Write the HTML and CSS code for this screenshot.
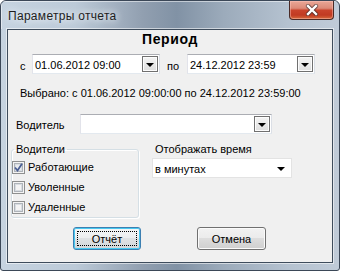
FILE: index.html
```html
<!DOCTYPE html>
<html>
<head>
<meta charset="utf-8">
<link rel="stylesheet" href="styles.css">
</head>
<body>
<div class="window">
  <div class="titlebar">
    <span class="title">Параметры отчета</span>
    <span class="close">
      <svg width="16" height="12" viewBox="0 0 16 12"><path d="M4 2 L12 10 M12 2 L4 10" stroke="#3a2a2a" stroke-width="4.2" fill="none" stroke-linecap="round" opacity="0.7"/><path d="M4 2 L12 10 M12 2 L4 10" stroke="#fff" stroke-width="2.4" fill="none" stroke-linecap="square"/></svg>
    </span>
  </div>
  <div class="frame">
    <div class="client">
      <div class="heading">Период</div>
      <div class="daterow">
        <span class="lbl-from">с</span>
        <div class="combo date"><span class="val">01.06.2012 09:00</span><span class="dd"><i></i></span></div>
        <span class="lbl-to">по</span>
        <div class="combo date"><span class="val">24.12.2012 23:59</span><span class="dd"><i></i></span></div>
      </div>
      <div class="selected">Выбрано: с 01.06.2012 09:00:00 по 24.12.2012 23:59:00</div>
      <div class="driverrow">
        <span class="lbl-driver">Водитель</span>
        <div class="combo driver"><span class="val"></span><span class="dd"><i></i></span></div>
      </div>
      <div class="lower">
        <fieldset class="group">
          <legend>Водители</legend>
          <div class="chkrow"><span class="chk checked"><svg width="9" height="9" viewBox="0 0 9 9"><path d="M1 4.5 L3.5 7.5 L8 0.8" stroke="#4b5f94" stroke-width="1.8" fill="none"/></svg></span><span>Работающие</span></div>
          <div class="chkrow"><span class="chk"></span><span>Уволенные</span></div>
          <div class="chkrow"><span class="chk"></span><span>Удаленные</span></div>
        </fieldset>
        <div class="timecol">
          <div class="lbl-time">Отображать время</div>
          <div class="flatcombo"><span>в минутах</span><i></i></div>
        </div>
      </div>
      <div class="buttons">
        <button class="btn default"><span>Отчёт</span></button>
        <button class="btn cancel"><span>Отмена</span></button>
      </div>
    </div>
  </div>
</div>
</body>
</html>
```
FILE: styles.css
```css
html, body {
  margin: 0;
  padding: 0;
  background: #ffffff;
}
.window {
  width: 340px;
  height: 271px;
  box-sizing: border-box;
  border: 1px solid #3b4757;
  border-radius: 6px 6px 3px 3px;
  background: linear-gradient(to right, #c6d3e0 0%, #bccad8 22%, #919fb0 42%, #8192a5 52%, #9cabbb 66%, #b5c2d0 85%, #c0cbd8 100%);
  display: flex;
  flex-direction: column;
  font-family: "Liberation Sans", Arial, sans-serif;
  font-size: 11px;
  color: #000;
  overflow: hidden;
}
.titlebar {
  height: 28px;
  display: flex;
  align-items: flex-start;
  justify-content: space-between;
  box-shadow: inset 1px 1px 0 rgba(255,255,255,0.5);
}
.title {
  font-family: "Liberation Sans", Arial, sans-serif;
  font-size: 12px;
  letter-spacing: 0.3px;
  color: #1e1e1e;
  margin: 8px 0 0 7px;
  text-shadow: 0 0 6px #eef3f8, 0 0 10px #e6edf4;
}
.close {
  width: 45px;
  height: 19px;
  margin-right: 5px;
  box-sizing: border-box;
  border: 1px solid #4a2a26;
  border-top: none;
  border-radius: 0 0 4px 4px;
  background: linear-gradient(#e9a797 0%, #dc8a78 40%, #c9432b 52%, #c13a22 78%, #d66a3c 100%);
  box-shadow: inset 0 0 0 1px rgba(255,200,190,0.45);
  display: flex;
  align-items: center;
  justify-content: center;
}
.frame {
  flex: 1;
  padding: 0 6px 7px 6px;
  display: flex;
}
.client {
  flex: 1;
  background: #f0f0f0;
  border: 1px solid #3e4c5c;
  box-shadow: 0 0 0 1px rgba(255,255,255,0.55);
  display: flex;
  flex-direction: column;
}
.heading {
  margin-top: 1px;
  height: 16px;
  line-height: 16px;
  text-align: center;
  font-weight: bold;
  font-size: 14px;
  letter-spacing: 0.6px;
}
.daterow {
  margin-top: 7px;
  height: 20px;
  display: flex;
  align-items: center;
  padding-left: 12px;
}
.lbl-from {
  width: 12px;
  padding-top: 4px;
}
.lbl-to {
  width: 20px;
  margin-left: 7px;
  padding-top: 4px;
}
.combo {
  box-sizing: border-box;
  height: 20px;
  background: #fff;
  border: 1px solid #abadb3;
  border-color: #abadb3 #dbdfe6 #e3e9ef #e2e3ea;
  display: flex;
  align-items: center;
  justify-content: space-between;
  padding: 0 1px 0 2px;
}
.combo.date {
  width: 128px;
}
.combo .val {
  padding-top: 1px;
  white-space: nowrap;
}
.dd {
  width: 16px;
  height: 16px;
  box-sizing: border-box;
  border: 1px solid #707070;
  background: linear-gradient(#f4f4f4, #dedede);
  box-shadow: inset 0 0 0 1px #fcfcfc;
  display: flex;
  align-items: center;
  justify-content: center;
}
.dd i {
  width: 0;
  height: 0;
  border-left: 4px solid transparent;
  border-right: 4px solid transparent;
  border-top: 4px solid #000;
  margin-top: 1px;
}
.selected {
  margin-top: 12px;
  height: 14px;
  line-height: 14px;
  padding-left: 12px;
  white-space: nowrap;
}
.driverrow {
  margin-top: 14px;
  height: 20px;
  display: flex;
  align-items: center;
  padding-left: 8px;
}
.lbl-driver {
  width: 64px;
  padding-top: 2px;
}
.combo.driver {
  width: 192px;
}
.lower {
  margin-top: 8px;
  display: flex;
  align-items: flex-start;
}
.group {
  margin: 0 0 0 3px;
  width: 128px;
  box-sizing: border-box;
  padding: 1px 0 0 0;
  border: 1px solid #d5dfe5;
  border-radius: 3px;
  box-shadow: inset 1px 1px 0 #fff, 1px 1px 0 #fff;
}
.group legend {
  padding: 0 2px;
  margin-left: 2px;
  height: 14px;
  line-height: 14px;
}
.chkrow {
  height: 20px;
  display: flex;
  align-items: center;
  gap: 3px;
  padding-left: 0;
}
.chk {
  width: 13px;
  height: 13px;
  box-sizing: border-box;
  border: 1px solid #8e8f8f;
  background: #f4f4f4;
  box-shadow: inset 0 0 0 1px #f4f4f4, inset 0 0 0 2px #aeb3b9, inset 0 0 0 3px #d8dde2;
  display: flex;
  align-items: center;
  justify-content: center;
}
.chk.checked {
  background: #eaedf0;
}
.timecol {
  margin-left: 13px;
  display: flex;
  flex-direction: column;
}
.lbl-time {
  height: 14px;
  line-height: 14px;
  padding-left: 3px;
}
.flatcombo {
  margin-top: 2px;
  width: 140px;
  height: 20px;
  box-sizing: border-box;
  background: #fff;
  border: 1px solid #e3e3e3;
  display: flex;
  align-items: center;
  justify-content: space-between;
  padding: 1px 6px 0 2px;
}
.flatcombo i {
  width: 0;
  height: 0;
  border-left: 4px solid transparent;
  border-right: 4px solid transparent;
  border-top: 4px solid #000;
}
.buttons {
  margin-top: 9px;
  display: flex;
  padding-left: 65px;
}
.btn {
  height: 23px;
  box-sizing: border-box;
  border: 1px solid #707070;
  border-radius: 3px;
  background: linear-gradient(#f2f2f2 0%, #ebebeb 49%, #dddddd 50%, #cfcfcf 100%);
  box-shadow: inset 0 0 0 1px #fbfbfb;
  font-family: "Liberation Sans", Arial, sans-serif;
  font-size: 11px;
  color: #000;
  padding: 0;
  display: flex;
  align-items: center;
  justify-content: center;
}
.btn.default {
  width: 68px;
  border-color: #3c7fb1;
  background: linear-gradient(#f4f6f7 0%, #eceeef 49%, #dfe2e4 50%, #d3d7da 100%);
  box-shadow: inset 0 0 0 1px #48c8f0;
}
.btn.default span {
  width: 60px;
  height: 15px;
  line-height: 15px;
  border: 1px dotted #000;
  box-sizing: border-box;
  display: block;
  text-align: center;
}
.btn.cancel {
  width: 69px;
  margin-left: 56px;
}
```
